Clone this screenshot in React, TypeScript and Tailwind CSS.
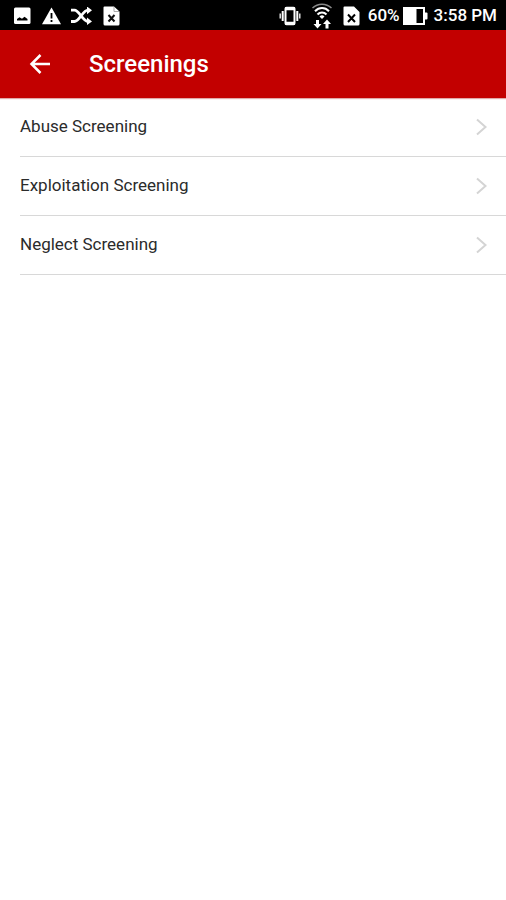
const screenings = [
  { id: "abuse", title: "Abuse Screening" },
  { id: "exploitation", title: "Exploitation Screening" },
  { id: "neglect", title: "Neglect Screening" },
];

function ImageIcon() {
  return (
    <svg width="18" height="18" viewBox="0 0 18 18" fill="none" aria-hidden="true">
      <rect x="1" y="0.5" width="16.5" height="16.5" rx="1.5" fill="#fff" />
      <path d="M4 13.5V12l2.5-1.8 2.5 1.5 2.5-1.9 3 2.2v1.5Z" fill="#000" />
    </svg>
  );
}

function WarningIcon() {
  return (
    <svg width="20" height="18" viewBox="0 0 20 18" fill="none" aria-hidden="true">
      <path d="M10.5 0.5 20 17.2H1Z" fill="#fff" />
      <path d="M9.6 6h1.8v5.5H9.6zM9.6 13h1.8v2H9.6z" fill="#000" />
    </svg>
  );
}

function ShuffleIcon() {
  return (
    <svg width="22" height="18" viewBox="0 0 22 18" fill="none" aria-hidden="true">
      <path
        d="M0 3.2H3.5C8 3.2 12 14.5 17 14.5H18M0 14.5H3.5C8 14.5 12 3.2 17 3.2H18"
        stroke="#fff"
        strokeWidth="2.8"
      />
      <path d="M16 -0.5 21 3.3 16 7.2ZM16 10.6 21 14.4 16 18Z" fill="#fff" />
    </svg>
  );
}

function NoteErrorIcon() {
  return (
    <svg width="17" height="20" viewBox="0 0 17 20" fill="none" aria-hidden="true">
      <path d="M1.5 0.5H11L16.5 5.5V18a1.5 1.5 0 0 1-1.5 1.5H2A1.5 1.5 0 0 1 0.5 18V1.5a1 1 0 0 1 1-1Z" fill="#fff" />
      <path d="M11 1V5.5H16" stroke="#aaa" />
      <path d="m5.5 9 6 6.5M11.5 9l-6 6.5" stroke="#111" strokeWidth="2" />
    </svg>
  );
}

function VibrateIcon() {
  return (
    <svg width="22" height="20" viewBox="0 0 22 20" fill="none" stroke="#fff" aria-hidden="true">
      <rect x="6.5" y="1.8" width="9" height="16.4" rx="1" strokeWidth="2" />
      <path d="M6 2.8h10M6 17.2h10" strokeWidth="3" />
      <path d="M3.7 5v10M18.3 5v10" strokeWidth="2" />
      <path d="M1.2 7.5v5M20.8 7.5v5" strokeWidth="1.3" />
    </svg>
  );
}

function WifiTransferIcon() {
  return (
    <svg width="22" height="26" viewBox="0 0 22 26" fill="none" aria-hidden="true">
      <path d="M1.5 5C7 0 15 0 20.5 5" stroke="#8a8a8a" strokeWidth="1.5" />
      <path d="M4 8.2C8 4 14 4 18 8.2M6.5 11.5C9 8.7 13 8.7 15.5 11.5" stroke="#fff" strokeWidth="2" />
      <path d="M8.5 13.5c1.6-1.6 3.4-1.6 5 0L11 16Z" fill="#fff" />
      <path d="M5 17h3v4h2.5L6.5 25.5 2.5 21H5ZM14.5 25.5h3V21H20L16 16.5 12 21h2.5Z" fill="#fff" />
    </svg>
  );
}

function SimErrorIcon() {
  return (
    <svg width="17" height="20" viewBox="0 0 17 20" fill="none" aria-hidden="true">
      <path d="M1.5 0.5H11L16.5 6V18a1.5 1.5 0 0 1-1.5 1.5H2A1.5 1.5 0 0 1 0.5 18V1.5a1 1 0 0 1 1-1Z" fill="#fff" />
      <path d="m5 8.5 7 7.5M12 8.5 5 16" stroke="#000" strokeWidth="2" />
    </svg>
  );
}

function BatteryIcon() {
  return (
    <svg width="25" height="18" viewBox="0 0 25 18" fill="none" aria-hidden="true">
      <rect x="1" y="1" width="20" height="16" stroke="#fff" strokeWidth="2" />
      <path d="M1 1h12.5v16H1Z" fill="#fff" />
      <path d="M22 5.5h1.5a1 1 0 0 1 1 1v5a1 1 0 0 1-1 1H22Z" fill="#fff" />
    </svg>
  );
}

function StatusBar() {
  return (
    <div className="flex h-[30px] items-center justify-between bg-black pt-px pr-[9px] pl-[13px] text-white">
      <div className="flex items-center gap-[10px]">
        <ImageIcon />
        <WarningIcon />
        <ShuffleIcon />
        <NoteErrorIcon />
      </div>
      <div className="flex items-center text-[17px] leading-none font-medium">
        <div className="mr-2 flex items-center gap-[10px]">
          <VibrateIcon />
          <WifiTransferIcon />
          <SimErrorIcon />
        </div>
        <span className="mr-[3px]">60%</span>
        <BatteryIcon />
        <time className="ml-[6px]">3:58 PM</time>
      </div>
    </div>
  );
}

export default function App() {
  return (
    <div className="min-h-screen bg-white font-['Roboto',sans-serif]">
      <StatusBar />

      <header className="flex h-[68px] items-center bg-[#c20000] px-7 text-white shadow-[0_1px_1px_#e0a8a8]">
        <button type="button" aria-label="Back" className="mr-[37px]">
          <svg width="24" height="24" viewBox="0 0 24 24" fill="none" stroke="currentColor" strokeWidth="2.5" aria-hidden="true">
            <path d="M22 12H4M12.5 3 3.5 12l9 9" />
          </svg>
        </button>
        <h1 className="text-2xl font-medium">Screenings</h1>
      </header>

      <main>
        <ul className="pl-5">
          {screenings.map((screening) => (
            <li key={screening.id} className="border-b border-[#d8d8d8]">
              <button
                type="button"
                className="flex h-[58px] w-full items-center justify-between pr-[18px] text-left text-[17px] text-[#2b2b2b]"
              >
                {screening.title}
                <svg width="13" height="18" viewBox="0 0 13 18" fill="none" stroke="#d4d4d4" strokeWidth="2" aria-hidden="true">
                  <path d="m2 1.5 8.5 7.5L2 16.5" />
                </svg>
              </button>
            </li>
          ))}
        </ul>
      </main>
    </div>
  );
}
